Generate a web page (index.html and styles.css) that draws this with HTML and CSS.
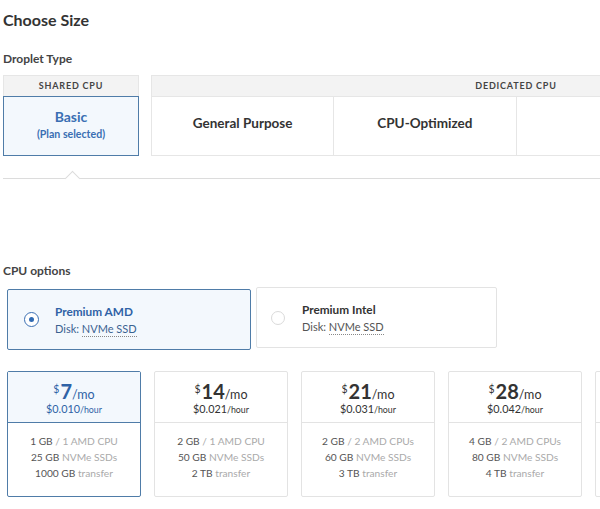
FILE: index.html
```html
<!DOCTYPE html>
<html>
<head>
<meta charset="utf-8">
<link rel="stylesheet" href="styles.css">
</head>
<body>
<div class="page">
  <h1 class="title">Choose Size</h1>
  <h2 class="label">Droplet Type</h2>
  <div class="types">
    <div class="group shared">
      <div class="group-head">SHARED CPU</div>
      <div class="cells">
        <div class="cell selected"><span class="cell-name">Basic</span><span class="cell-sub">(Plan selected)</span></div>
      </div>
    </div>
    <div class="group dedicated">
      <div class="group-head">DEDICATED CPU</div>
      <div class="cells">
        <div class="cell"><span class="cell-name">General Purpose</span></div>
        <div class="cell"><span class="cell-name">CPU-Optimized</span></div>
        <div class="cell"></div>
        <div class="cell"></div>
      </div>
    </div>
  </div>
  <div class="pointer-line"><span class="notch"></span></div>

  <h2 class="label cpu-label">CPU options</h2>
  <div class="options">
    <div class="option selected">
      <span class="radio on"></span>
      <div class="opt-text">
        <div class="opt-name">Premium AMD</div>
        <div class="opt-disk">Disk: <span class="dotted">NVMe SSD</span></div>
      </div>
    </div>
    <div class="option">
      <span class="radio"></span>
      <div class="opt-text">
        <div class="opt-name">Premium Intel</div>
        <div class="opt-disk">Disk: <span class="dotted">NVMe SSD</span></div>
      </div>
    </div>
  </div>

  <div class="plans">
    <div class="plan selected">
      <div class="plan-head">
        <div class="price"><span class="cur">$</span><span class="amt">7</span><span class="per">/mo</span></div>
        <div class="hourly">$0.010<span class="hr">/hour</span></div>
      </div>
      <div class="plan-body">
        <div><b>1 GB</b> / 1 AMD CPU</div>
        <div><b>25 GB</b> NVMe SSDs</div>
        <div><b>1000 GB</b> transfer</div>
      </div>
    </div>
    <div class="plan">
      <div class="plan-head">
        <div class="price"><span class="cur">$</span><span class="amt">14</span><span class="per">/mo</span></div>
        <div class="hourly">$0.021<span class="hr">/hour</span></div>
      </div>
      <div class="plan-body">
        <div><b>2 GB</b> / 1 AMD CPU</div>
        <div><b>50 GB</b> NVMe SSDs</div>
        <div><b>2 TB</b> transfer</div>
      </div>
    </div>
    <div class="plan">
      <div class="plan-head">
        <div class="price"><span class="cur">$</span><span class="amt">21</span><span class="per">/mo</span></div>
        <div class="hourly">$0.031<span class="hr">/hour</span></div>
      </div>
      <div class="plan-body">
        <div><b>2 GB</b> / 2 AMD CPUs</div>
        <div><b>60 GB</b> NVMe SSDs</div>
        <div><b>3 TB</b> transfer</div>
      </div>
    </div>
    <div class="plan">
      <div class="plan-head">
        <div class="price"><span class="cur">$</span><span class="amt">28</span><span class="per">/mo</span></div>
        <div class="hourly">$0.042<span class="hr">/hour</span></div>
      </div>
      <div class="plan-body">
        <div><b>4 GB</b> / 2 AMD CPUs</div>
        <div><b>80 GB</b> NVMe SSDs</div>
        <div><b>4 TB</b> transfer</div>
      </div>
    </div>
    <div class="plan">
      <div class="plan-head"></div>
      <div class="plan-body"></div>
    </div>
  </div>
</div>
</body>
</html>
```

FILE: styles.css
```css
html, body {
  margin: 0;
  padding: 0;
  background: #fff;
}
body {
  width: 600px;
  height: 509px;
  overflow: hidden;
  font-family: Lato, "Liberation Sans", sans-serif;
  color: #333;
}
.page {
  padding: 10px 0 0 3px;
  width: 1200px;
}
.title {
  margin: 0;
  font-size: 16px;
  line-height: 20px;
  font-weight: 700;
  color: #333;
}
.label {
  margin: 0;
  font-size: 12px;
  line-height: 16px;
  font-weight: 700;
  color: #444;
}
.title + .label {
  margin-top: 21px;
}
.types {
  display: flex;
  gap: 12px;
  margin-top: 8px;
}
.group {
  border: 1px solid #e6e6e6;
  background: #fff;
}
.group-head {
  height: 20px;
  line-height: 20px;
  background: #f3f3f3;
  font-size: 9px;
  font-weight: 700;
  letter-spacing: 0.8px;
  color: #444;
  text-align: center;
  border-bottom: 1px solid #e6e6e6;
}
.shared {
  width: 134px;
}
.dedicated {
  width: 728px;
}
.cells {
  display: flex;
  height: 58px;
}
.cell {
  flex: 1;
  display: flex;
  flex-direction: column;
  align-items: center;
  justify-content: center;
  padding-bottom: 7px;
  box-sizing: border-box;
  border-left: 1px solid #e6e6e6;
}
.cell:first-child {
  border-left: none;
}
.cell-name {
  font-size: 13.5px;
  font-weight: 700;
  color: #333;
}
.cell.selected {
  background: #f3f8fd;
  box-shadow: inset 0 0 0 1px #4f7ca8;
  margin: -1px;
  height: 60px;
  border: none;
  padding-bottom: 5px;
}
.cell.selected .cell-name {
  color: #3a6fb3;
  font-size: 14px;
}
.cell-sub {
  font-size: 10.6px;
  font-weight: 700;
  color: #3a6fb3;
  margin-top: 3px;
}
.pointer-line {
  position: relative;
  margin-top: 22px;
  height: 0;
  border-top: 1px solid #dcdcdc;
}
.notch {
  position: absolute;
  left: 64px;
  top: -6px;
  width: 10px;
  height: 10px;
  background: #fff;
  border-top: 1px solid #dcdcdc;
  border-left: 1px solid #dcdcdc;
  transform: rotate(45deg);
}
.cpu-label {
  margin-top: 84px;
}
.options {
  display: flex;
  align-items: flex-start;
  gap: 5px;
  margin-top: 8px;
}
.option {
  display: flex;
  align-items: center;
  height: 59px;
  width: 239px;
  border: 1px solid #e3e3e3;
  border-radius: 2px;
  background: #fff;
}
.option.selected {
  margin-left: 4px;
  margin-top: 2px;
  width: 242px;
  border-color: #4f7ca8;
  background: #f3f8fd;
}
.radio {
  width: 14px;
  height: 14px;
  border: 1px solid #dadada;
  border-radius: 50%;
  margin-left: 14px;
  margin-right: 17px;
  box-sizing: border-box;
  background: #fff;
  display: flex;
  align-items: center;
  justify-content: center;
  flex: none;
}
.option.selected .radio {
  width: 15px;
  height: 15px;
  margin-left: 16px;
  margin-right: 16px;
  border: 1.5px solid #3a6fb3;
}
.radio.on::after {
  content: "";
  width: 5px;
  height: 5px;
  border-radius: 50%;
  background: #2f6ab3;
}
.opt-name {
  font-size: 11.8px;
  font-weight: 700;
  color: #333;
  line-height: 15px;
}
.option.selected .opt-name {
  color: #2f62a6;
}
.opt-disk {
  font-size: 11px;
  color: #555;
  line-height: 15px;
  margin-top: 2px;
}
.option.selected .opt-disk {
  color: #3a6291;
}
.dotted {
  border-bottom: 1px dotted #888;
  padding-bottom: 1px;
}
.plans {
  display: flex;
  gap: 13px;
  margin-top: 21px;
  margin-left: 4px;
}
.plan {
  width: 132px;
  height: 124px;
  border: 1px solid #e3e3e3;
  border-radius: 2px;
  flex: none;
  text-align: center;
}
.plan.selected {
  border-color: #4f7ca8;
}
.plan-head {
  height: 51px;
  border-bottom: 1px solid #e3e3e3;
  box-sizing: border-box;
  padding-top: 8px;
}
.plan.selected .plan-head {
  background: #f3f8fd;
  border-bottom-color: #4f7ca8;
}
.price {
  line-height: 18px;
  color: #333;
}
.cur {
  font-size: 10.5px;
  vertical-align: 6px;
  margin-right: 1px;
}
.amt {
  font-size: 20px;
  font-weight: 700;
}
.per {
  font-size: 12.5px;
}
.hourly {
  font-size: 10.8px;
  color: #333;
  line-height: 13px;
  margin-top: -2px;
}
.hr {
  font-size: 8.8px;
}
.plan.selected .price,
.plan.selected .hourly {
  color: #2f62a6;
}
.plan-body {
  padding-top: 10px;
  font-size: 10.2px;
  line-height: 16px;
  color: #aaa;
}
.plan-body b {
  font-weight: 400;
  color: #555;
}
```
